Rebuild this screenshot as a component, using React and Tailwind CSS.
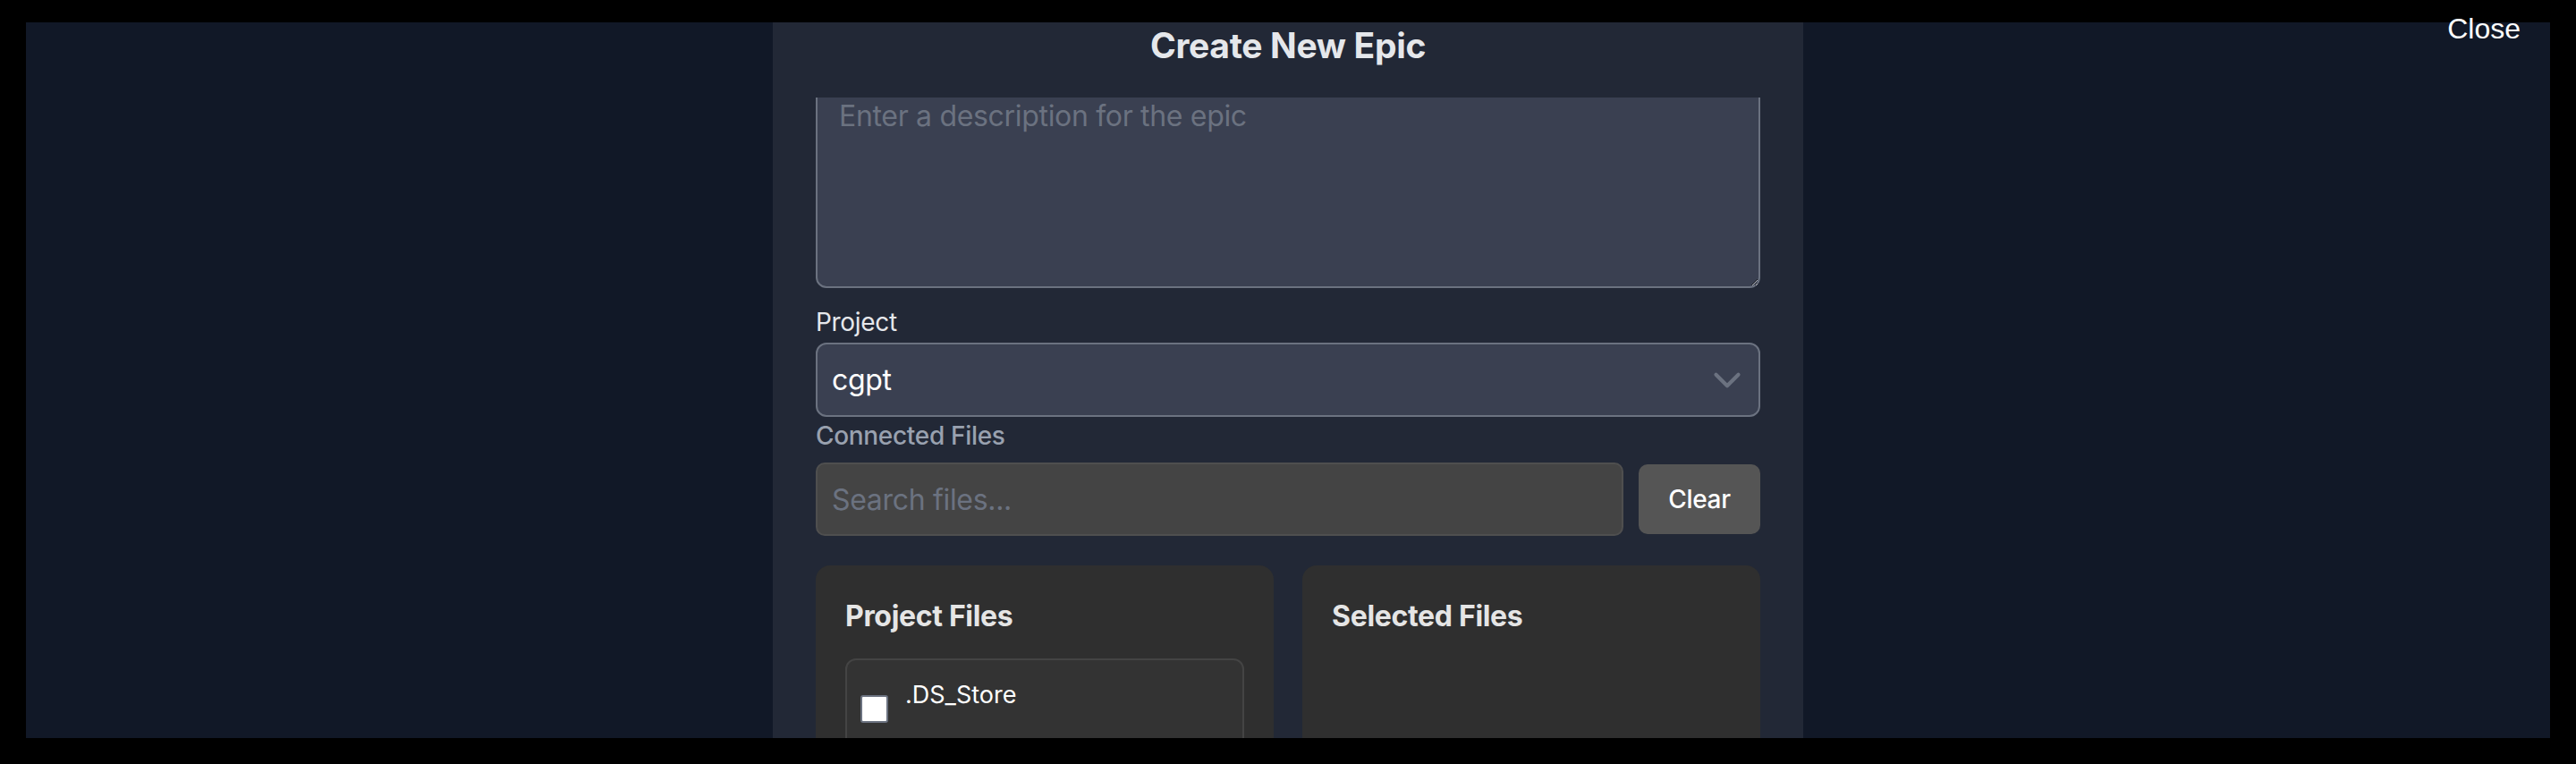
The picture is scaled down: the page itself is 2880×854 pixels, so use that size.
import { ChevronDown } from 'lucide-react'

function FileItem({ name, meta }) {
    return (
        <div className="flex items-start gap-[19px] rounded-[12px] border-2 border-[#444444] bg-[#333333] pl-[15px] pt-[21px] pb-[20px]">
            <input
                type="checkbox"
                className="mt-[18px] h-[31px] w-[31px] shrink-0 appearance-none rounded-[3px] border-2 border-[#6b7280] bg-white"
            />
            <div className="flex flex-col">
                <span className="text-[27px] leading-[36px] tracking-normal text-white">{name}</span>
                <span className="mt-[26px] text-[20px] leading-[30px] text-gray-400">{meta}</span>
            </div>
        </div>
    )
}

export default function App() {
    return (
        <div className="relative h-[854px] bg-black px-[29px] pt-[25px] pb-[29px] font-['Inter',sans-serif] tracking-[-0.02em]">
            <div className="flex h-[800px] justify-center overflow-hidden bg-[#111827]">
                <div className="flex h-full w-[1152px] flex-col bg-[#222836] px-[48px]">
                    {/* sticky header */}
                    <div className="h-[84px] shrink-0 pt-[2px]">
                        <h2 className="text-center text-[39px] font-bold leading-[48px] text-gray-200">
                            Create New Epic
                        </h2>
                    </div>

                    {/* scrolled body */}
                    <div className="flex-1 overflow-hidden">
                        <div className="-mt-[21px]">
                            <textarea
                                placeholder="Enter a description for the epic"
                                className="block h-[234px] w-full rounded-[12px] border-2 border-[#6b7280] bg-[#3a4051] px-[24px] py-[16px] text-[32px] leading-[48px] text-white outline-none placeholder:text-[#6b7280]"
                            />

                            <label className="mt-[17px] block text-[28px] leading-[42px] text-gray-200">
                                Project
                            </label>
                            <div className="relative mt-[2px]">
                                <select
                                    defaultValue="cgpt"
                                    className="block h-[83px] w-full appearance-none rounded-[12px] border-2 border-[#6b7280] bg-[#3a4051] pl-[16px] text-[32px] text-white outline-none"
                                >
                                    <option value="cgpt">cgpt</option>
                                </select>
                                <ChevronDown
                                    size={50}
                                    strokeWidth={2}
                                    className="pointer-events-none absolute right-[12px] top-1/2 -translate-y-1/2 text-[#6b7280]"
                                />
                            </div>

                            <div className="mt-[1px] mb-[10px] text-[28px] font-medium leading-[40px] text-gray-400">
                                Connected Files
                            </div>
                            <div className="flex items-center gap-[17px]">
                                <input
                                    type="text"
                                    placeholder="Search files..."
                                    className="h-[82px] flex-1 rounded-[10px] border-2 border-[#4f4f4f] bg-[#444444] px-[16px] text-[32px] text-white outline-none placeholder:text-[#6b7280]"
                                />
                                <button className="h-[78px] w-[136px] rounded-[10px] bg-[#555555] text-[28px] font-medium text-white">
                                    Clear
                                </button>
                            </div>

                            <div className="mt-[33px] grid grid-cols-2 gap-[32px]">
                                <div className="h-[400px] rounded-[16px] bg-[#2f2f2f] px-[33px] pt-[33px]">
                                    <h3 className="mb-[23px] text-[32px] font-bold leading-[48px] text-[#e5e5e5]">
                                        Project Files
                                    </h3>
                                    <FileItem name=".DS_Store" meta="Last modified" />
                                </div>
                                <div className="h-[400px] rounded-[16px] bg-[#2f2f2f] px-[33px] pt-[33px]">
                                    <h3 className="text-[32px] font-bold leading-[48px] text-[#e5e5e5]">
                                        Selected Files
                                    </h3>
                                </div>
                            </div>
                        </div>
                    </div>
                </div>
            </div>

            <button className="absolute right-[62px] top-[16px] font-['Liberation_Sans',Arial,sans-serif] text-[32px] leading-none tracking-normal text-white">
                Close
            </button>
        </div>
    )
}
